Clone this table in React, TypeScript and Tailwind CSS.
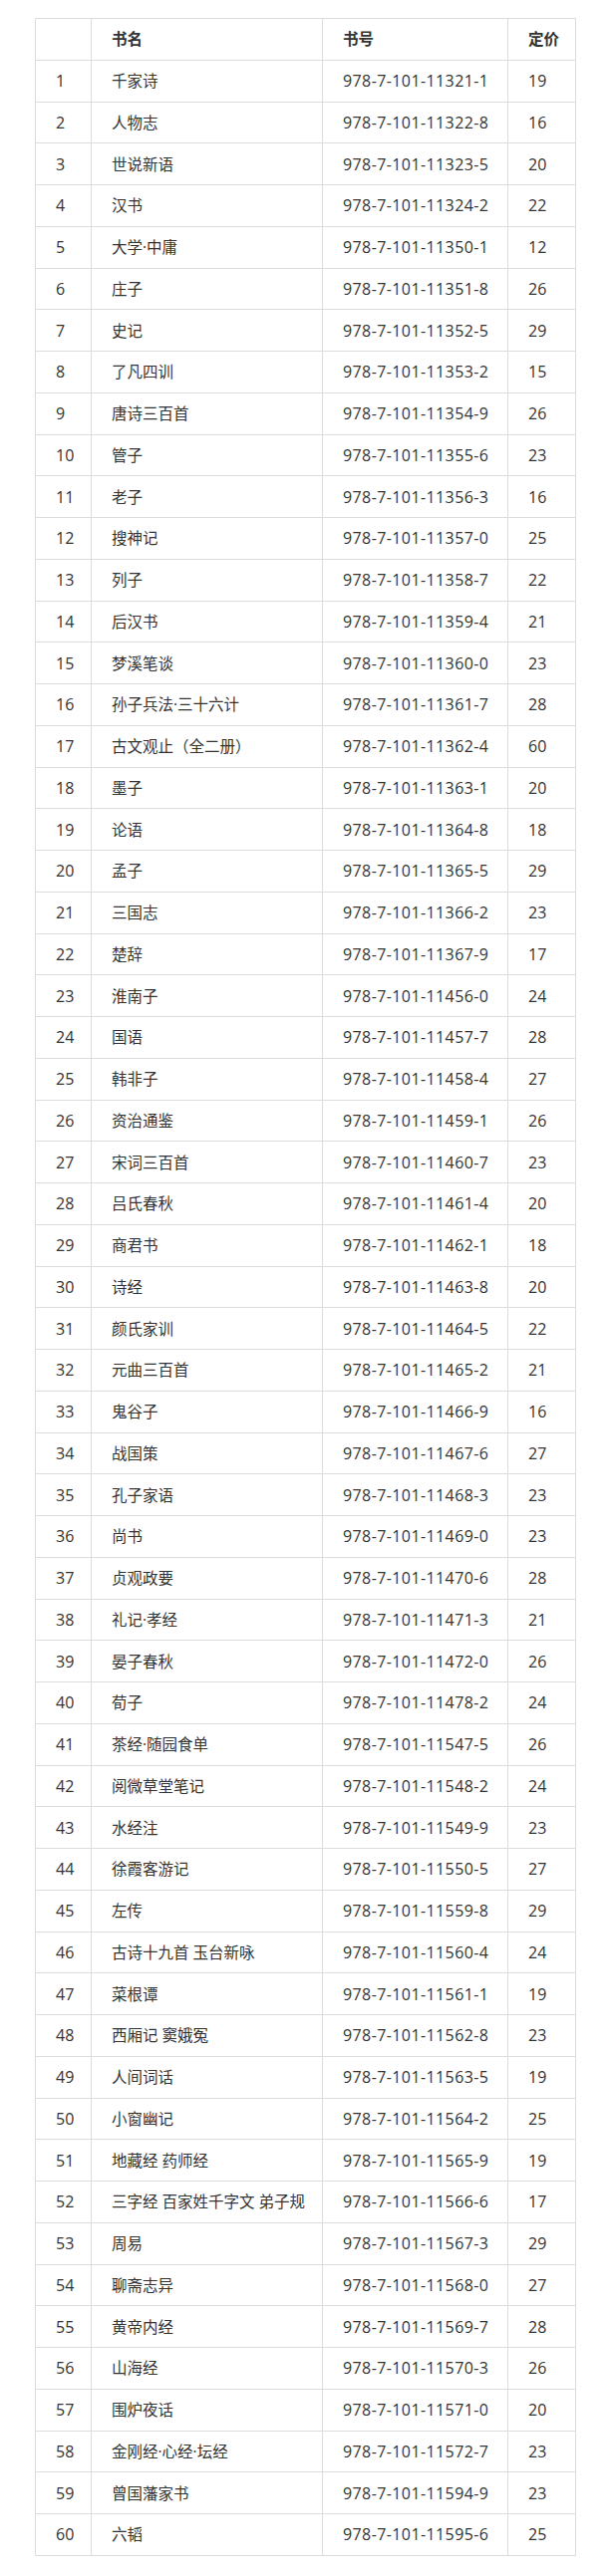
const books: [string, string, number][] = [
  ["千家诗", "11321-1", 19],
  ["人物志", "11322-8", 16],
  ["世说新语", "11323-5", 20],
  ["汉书", "11324-2", 22],
  ["大学·中庸", "11350-1", 12],
  ["庄子", "11351-8", 26],
  ["史记", "11352-5", 29],
  ["了凡四训", "11353-2", 15],
  ["唐诗三百首", "11354-9", 26],
  ["管子", "11355-6", 23],
  ["老子", "11356-3", 16],
  ["搜神记", "11357-0", 25],
  ["列子", "11358-7", 22],
  ["后汉书", "11359-4", 21],
  ["梦溪笔谈", "11360-0", 23],
  ["孙子兵法·三十六计", "11361-7", 28],
  ["古文观止（全二册）", "11362-4", 60],
  ["墨子", "11363-1", 20],
  ["论语", "11364-8", 18],
  ["孟子", "11365-5", 29],
  ["三国志", "11366-2", 23],
  ["楚辞", "11367-9", 17],
  ["淮南子", "11456-0", 24],
  ["国语", "11457-7", 28],
  ["韩非子", "11458-4", 27],
  ["资治通鉴", "11459-1", 26],
  ["宋词三百首", "11460-7", 23],
  ["吕氏春秋", "11461-4", 20],
  ["商君书", "11462-1", 18],
  ["诗经", "11463-8", 20],
  ["颜氏家训", "11464-5", 22],
  ["元曲三百首", "11465-2", 21],
  ["鬼谷子", "11466-9", 16],
  ["战国策", "11467-6", 27],
  ["孔子家语", "11468-3", 23],
  ["尚书", "11469-0", 23],
  ["贞观政要", "11470-6", 28],
  ["礼记·孝经", "11471-3", 21],
  ["晏子春秋", "11472-0", 26],
  ["荀子", "11478-2", 24],
  ["茶经·随园食单", "11547-5", 26],
  ["阅微草堂笔记", "11548-2", 24],
  ["水经注", "11549-9", 23],
  ["徐霞客游记", "11550-5", 27],
  ["左传", "11559-8", 29],
  ["古诗十九首 玉台新咏", "11560-4", 24],
  ["菜根谭", "11561-1", 19],
  ["西厢记 窦娥冤", "11562-8", 23],
  ["人间词话", "11563-5", 19],
  ["小窗幽记", "11564-2", 25],
  ["地藏经 药师经", "11565-9", 19],
  ["三字经 百家姓千字文 弟子规", "11566-6", 17],
  ["周易", "11567-3", 29],
  ["聊斋志异", "11568-0", 27],
  ["黄帝内经", "11569-7", 28],
  ["山海经", "11570-3", 26],
  ["围炉夜话", "11571-0", 20],
  ["金刚经·心经·坛经", "11572-7", 23],
  ["曾国藩家书", "11594-9", 23],
  ["六韬", "11595-6", 25],
];

const cell = "border border-[#dcdcdc] pl-[20px] pr-2 py-0 h-[41.75px] align-middle text-left";

export default function App() {
  return (
    <div className="min-h-[2586px] bg-white pt-[18px] pl-[35px] font-['Open_Sans','Noto_Sans_CJK_SC',sans-serif] text-[16px] leading-[20px] text-[#333]">
      <table className="table-fixed border-collapse w-[543px]">
        <colgroup>
          <col className="w-[56px]" />
          <col className="w-[232px]" />
          <col className="w-[186px]" />
          <col className="w-[68px]" />
        </colgroup>
        <thead>
          <tr>
            <th className={cell}></th>
            <th className={`${cell} text-[15.5px] font-bold`}>书名</th>
            <th className={`${cell} text-[15.5px] font-bold`}>书号</th>
            <th className={`${cell} text-[15.5px] font-bold`}>定价</th>
          </tr>
        </thead>
        <tbody>
          {books.map(([name, isbn, price], i) => (
            <tr key={isbn}>
              <td className={cell}>{i + 1}</td>
              <td className={`${cell} text-[15.5px] whitespace-pre`}>{name}</td>
              <td className={`${cell} tracking-[0.4px]`}>978-7-101-{isbn}</td>
              <td className={cell}>{price}</td>
            </tr>
          ))}
        </tbody>
      </table>
    </div>
  );
}
